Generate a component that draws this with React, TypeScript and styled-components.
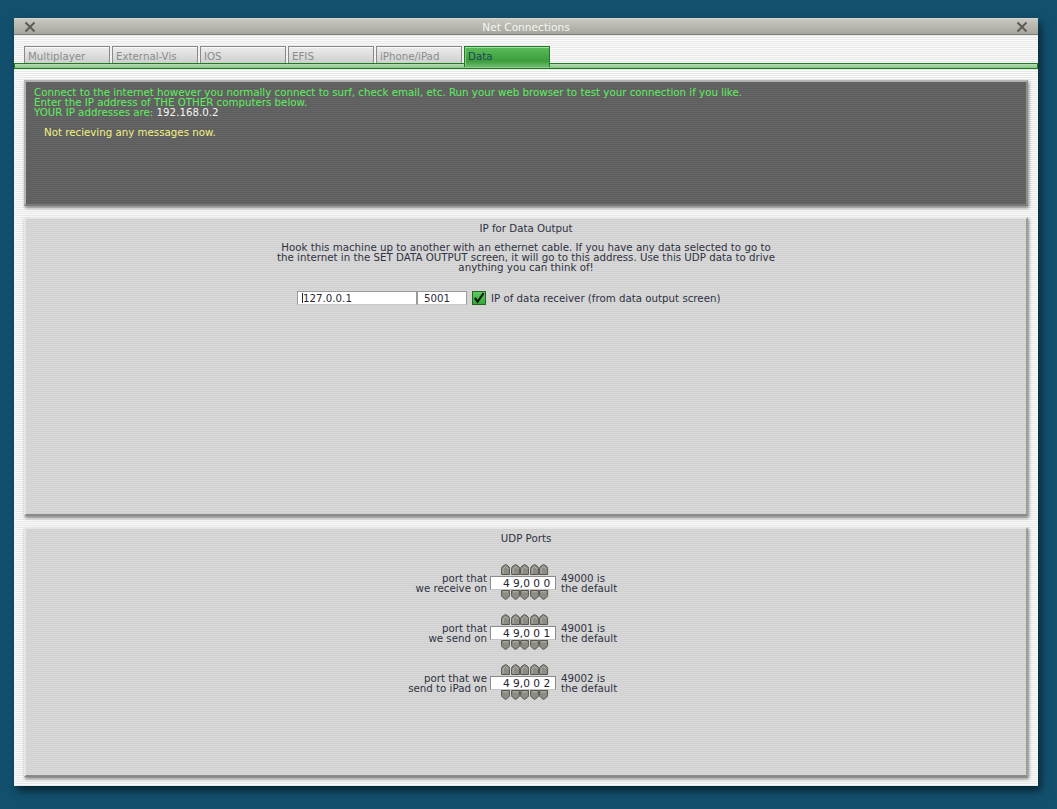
import React from 'react';
import styled, { createGlobalStyle, css } from 'styled-components';

const GlobalStyle = createGlobalStyle`
  html, body {
    margin: 0;
    padding: 0;
    background: #12506e;
    font-family: 'DejaVu Sans', 'Liberation Sans', sans-serif;
    font-size: 10.25px;
  }
`;

const TABS = ['Multiplayer', 'External-Vis', 'IOS', 'EFIS', 'iPhone/iPad', 'Data'];

const PORTS = [
  { left: ['port that', 'we receive on'], value: '4 9,0 0 0', right: ['49000 is', 'the default'] },
  { left: ['port that', 'we send on'], value: '4 9,0 0 1', right: ['49001 is', 'the default'] },
  { left: ['port that we', 'send to iPad on'], value: '4 9,0 0 2', right: ['49002 is', 'the default'] },
];

const Desktop = styled.div`
  min-height: 100vh;
  padding: 18px 0 0 14px;
  box-sizing: border-box;
`;

const Window = styled.div`
  width: 1024px;
  height: 768px;
  display: flex;
  flex-direction: column;
  background: repeating-linear-gradient(to bottom, #fbfbfb 0 1px, #e8e8e8 1px 2px);
  box-shadow: 3px 5px 8px rgba(0, 0, 0, 0.55);
`;

const TitleBar = styled.div`
  height: 17px;
  box-sizing: border-box;
  display: flex;
  align-items: center;
  justify-content: space-between;
  padding: 0 10px;
  background: linear-gradient(to bottom, #c8c8c0, #a6a69e);
  border-top: 1px solid #d6d6ce;
  border-bottom: 1px solid #7e7e76;
`;

const Title = styled.span`
  font-size: 10.6px;
  color: #f6f6f2;
  padding-top: 1px;
`;

const CloseGlyph = () => (
  <svg width="12" height="12" viewBox="0 0 12 12">
    <path d="M1.5 1.5 L10.5 10.5 M10.5 1.5 L1.5 10.5" stroke="#5c5c58" strokeWidth="2" />
  </svg>
);

const TabRow = styled.div`
  margin-top: 11px;
  height: 17px;
  padding: 0 10px;
  display: flex;
  align-items: flex-start;
  gap: 2px;
`;

const Tab = styled.div<{ $active?: boolean }>`
  width: 86px;
  height: 17px;
  box-sizing: border-box;
  padding: 3px 0 0 3px;
  line-height: 12px;
  border: 1px solid #8a8a8a;
  border-bottom: none;
  background: linear-gradient(to bottom, #ececec, #cfcfcf);
  box-shadow: inset 0 1px 0 #fafafa;
  color: #8c8c8c;

  ${(p) =>
    p.$active &&
    css`
      position: relative;
      z-index: 1;
      height: 21px;
      border-color: #227a22;
      background: linear-gradient(to bottom, #5cbc5c, #3b9d3b 70%, #6cbc6c);
      box-shadow: inset 0 1px 0 #a6e0a6, inset 1px 0 0 #7ccc7c;
      color: #22445c;
    `}
`;

const GreenBar = styled.div`
  height: 6px;
  box-sizing: border-box;
  border: 1px solid #1e7a1e;
  background: linear-gradient(to bottom, #b6deb6, #86c486);
`;

const Content = styled.div`
  flex: 1;
  display: flex;
  flex-direction: column;
  gap: 11px;
  padding: 11px 10px 9px;
`;

const Panel = styled.section<{ $dark?: boolean; $h: number }>`
  height: ${(p) => p.$h}px;
  box-sizing: border-box;
  border: 2px solid #b4b4b4;
  border-right-color: #8e8e8e;
  border-bottom-color: #7a7a7a;
  box-shadow: 1px 2px 3px rgba(0, 0, 0, 0.45);
  line-height: 10px;
  ${(p) =>
    p.$dark
      ? css`
          background: repeating-linear-gradient(to bottom, #5e5e5e 0 1px, #656565 1px 2px);
          padding: 5px 8px;
          color: #5cf05c;
        `
      : css`
          background: repeating-linear-gradient(to bottom, #d1d1d1 0 1px, #d8d8d8 1px 2px);
          border-color: #e6e6e6 #9c9c9c #8a8a8a #e6e6e6;
          padding: 4px 0 0;
          color: #2e3242;
        `}
`;

const Line = styled.div``;

const White = styled.span`
  color: #f4f4f4;
`;

const Notice = styled.div`
  margin-top: 10px;
  padding-left: 10px;
  color: #f2f282;
`;

const PanelTitle = styled.div`
  text-align: center;
`;

const Paragraph = styled.p`
  margin: 9px 0 0;
  text-align: center;
`;

const FieldRow = styled.div`
  margin: 19px 0 0 271px;
  display: flex;
  align-items: center;
`;

const Field = styled.div<{ $w: number }>`
  width: ${(p) => p.$w}px;
  height: 14px;
  box-sizing: border-box;
  padding-left: 6px;
  line-height: 12px;
  background: #fff;
  border: 1px solid #9a9a9a;
  border-bottom-color: #c8c8c8;
  color: #2a2a36;
`;

const Caret = styled.span`
  display: inline-block;
  width: 1px;
  height: 10px;
  margin: 0 0 -1px -2px;
  background: #222;
`;

const Check = styled.div`
  margin-left: 5px;
  width: 14px;
  height: 14px;
  box-sizing: border-box;
  border: 1px solid #2e5e2e;
  background: linear-gradient(to bottom, #5ccc5c, #34a834);
  display: flex;
`;

const CheckLabel = styled.span`
  margin-left: 5px;
`;

const PortList = styled.div`
  margin-top: 20px;
  display: flex;
  flex-direction: column;
  gap: 11px;
`;

const PortRow = styled.div`
  display: flex;
  align-items: center;
`;

const SideLabel = styled.div<{ $left?: boolean }>`
  ${(p) =>
    p.$left
      ? css`
          width: 461px;
          text-align: right;
          margin-right: 3px;
        `
      : css`
          margin-left: 5px;
        `}
`;

const Spinner = styled.div`
  width: 66px;
  display: flex;
  flex-direction: column;
`;

const Arrows = styled.div<{ $down?: boolean }>`
  height: 12px;
  padding-left: 11px;
  display: flex;
  gap: 0.4px;
  align-items: ${(p) => (p.$down ? 'flex-start' : 'flex-end')};
`;

const DigitBox = styled.div`
  height: 14px;
  box-sizing: border-box;
  margin-top: 1px;
  padding-left: 12px;
  background: #fff;
  border: 1px solid #8c8c8c;
  border-bottom-color: #c4c4c4;
  line-height: 12px;
  font-size: 10.6px;
  white-space: pre;
  color: #23232f;
`;

const UpArrow = () => (
  <svg width="9.2" height="11" viewBox="0 0 9 11">
    <path d="M0.5 10.5 V4.5 Q0.5 3 2 2 L4.5 0.5 L7 2 Q8.5 3 8.5 4.5 V10.5 Z" fill="#8c8c84" stroke="#56564f" />
    <path d="M2 9.5 V5 L4.5 2.6 L7 5" fill="none" stroke="#b4b4ac" />
  </svg>
);

const DownArrow = () => (
  <svg width="9.2" height="10" viewBox="0 0 9 10">
    <path d="M0.5 0.5 H8.5 V5.5 Q8.5 6.5 7.5 7.2 L4.5 9.5 L1.5 7.2 Q0.5 6.5 0.5 5.5 Z" fill="#8c8c84" stroke="#56564f" />
    <path d="M2 1.8 H7" fill="none" stroke="#b4b4ac" />
  </svg>
);

export default function App() {
  return (
    <>
      <GlobalStyle />
      <Desktop>
        <Window>
          <TitleBar>
            <CloseGlyph />
            <Title>Net Connections</Title>
            <CloseGlyph />
          </TitleBar>

          <TabRow>
            {TABS.map((t) => (
              <Tab key={t} $active={t === 'Data'}>
                {t}
              </Tab>
            ))}
          </TabRow>
          <GreenBar />

          <Content>
            <Panel $dark $h={126}>
              <Line>
                Connect to the internet however you normally connect to surf, check email, etc. Run your web browser to
                test your connection if you like.
              </Line>
              <Line>Enter the IP address of THE OTHER computers below.</Line>
              <Line>
                YOUR IP addresses are: <White>192.168.0.2</White>
              </Line>
              <Notice>Not recieving any messages now.</Notice>
            </Panel>

            <Panel $h={299}>
              <PanelTitle>IP for Data Output</PanelTitle>
              <Paragraph>
                Hook this machine up to another with an ethernet cable. If you have any data selected to go to
                <br />
                the internet in the SET DATA OUTPUT screen, it will go to this address. Use this UDP data to drive
                <br />
                anything you can think of!
              </Paragraph>
              <FieldRow>
                <Field $w={120}>
                  <Caret />
                  127.0.0.1
                </Field>
                <Field $w={50}>5001</Field>
                <Check>
                  <svg width="12" height="12" viewBox="0 0 12 12">
                    <path d="M1.8 5.8 L4.6 9.6 L10.6 1.2" fill="none" stroke="#0e1e0e" strokeWidth="2.2" />
                  </svg>
                </Check>
                <CheckLabel>IP of data receiver (from data output screen)</CheckLabel>
              </FieldRow>
            </Panel>

            <Panel $h={250}>
              <PanelTitle>UDP Ports</PanelTitle>
              <PortList>
                {PORTS.map((p) => (
                  <PortRow key={p.right[0]}>
                    <SideLabel $left>
                      {p.left[0]}
                      <br />
                      {p.left[1]}
                    </SideLabel>
                    <Spinner>
                      <Arrows>
                        {[0, 1, 2, 3, 4].map((i) => (
                          <UpArrow key={i} />
                        ))}
                      </Arrows>
                      <DigitBox>{p.value}</DigitBox>
                      <Arrows $down>
                        {[0, 1, 2, 3, 4].map((i) => (
                          <DownArrow key={i} />
                        ))}
                      </Arrows>
                    </Spinner>
                    <SideLabel>
                      {p.right[0]}
                      <br />
                      {p.right[1]}
                    </SideLabel>
                  </PortRow>
                ))}
              </PortList>
            </Panel>
          </Content>
        </Window>
      </Desktop>
    </>
  );
}
